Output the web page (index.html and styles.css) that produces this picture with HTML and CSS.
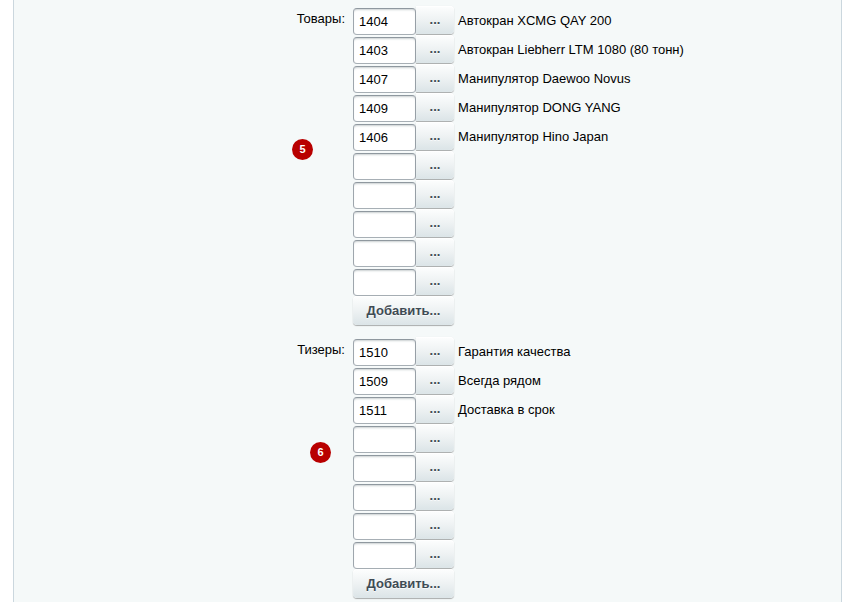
FILE: index.html
```html
<!DOCTYPE html>
<html lang="ru">
<head>
<meta charset="utf-8">
<title>Редактирование</title>
<link rel="stylesheet" href="styles.css">
</head>
<body>
<div class="panel">
  <div class="section first">
    <div class="label">Товары:</div>
    <div class="fields">
      <div class="row"><input class="inp" type="text" value="1404"><button class="dots">...</button><span class="name">Автокран XCMG QAY 200</span></div>
      <div class="row"><input class="inp" type="text" value="1403"><button class="dots">...</button><span class="name">Автокран Liebherr LTM 1080 (80 тонн)</span></div>
      <div class="row"><input class="inp" type="text" value="1407"><button class="dots">...</button><span class="name">Манипулятор Daewoo Novus</span></div>
      <div class="row"><input class="inp" type="text" value="1409"><button class="dots">...</button><span class="name">Манипулятор DONG YANG</span></div>
      <div class="row"><input class="inp" type="text" value="1406"><button class="dots">...</button><span class="name">Манипулятор Hino Japan</span></div>
      <div class="row"><input class="inp" type="text" value=""><button class="dots">...</button></div>
      <div class="row"><input class="inp" type="text" value=""><button class="dots">...</button></div>
      <div class="row"><input class="inp" type="text" value=""><button class="dots">...</button></div>
      <div class="row"><input class="inp" type="text" value=""><button class="dots">...</button></div>
      <div class="row"><input class="inp" type="text" value=""><button class="dots">...</button></div>
      <button class="add">Добавить...</button>
    </div>
    <span class="badge badge-5">5</span>
  </div>
  <div class="section second">
    <div class="label">Тизеры:</div>
    <div class="fields">
      <div class="row"><input class="inp" type="text" value="1510"><button class="dots">...</button><span class="name">Гарантия качества</span></div>
      <div class="row"><input class="inp" type="text" value="1509"><button class="dots">...</button><span class="name">Всегда рядом</span></div>
      <div class="row"><input class="inp" type="text" value="1511"><button class="dots">...</button><span class="name">Доставка в срок</span></div>
      <div class="row"><input class="inp" type="text" value=""><button class="dots">...</button></div>
      <div class="row"><input class="inp" type="text" value=""><button class="dots">...</button></div>
      <div class="row"><input class="inp" type="text" value=""><button class="dots">...</button></div>
      <div class="row"><input class="inp" type="text" value=""><button class="dots">...</button></div>
      <div class="row"><input class="inp" type="text" value=""><button class="dots">...</button></div>
      <button class="add">Добавить...</button>
    </div>
    <span class="badge badge-6">6</span>
  </div>
</div>
</body>
</html>
```

FILE: styles.css
```css
html, body {
  margin: 0;
  padding: 0;
  background: #ffffff;
}

body {
  font-family: "Liberation Sans", Arial, sans-serif;
  font-size: 13px;
  color: #000;
}

.panel {
  margin-left: 13px;
  width: 827px;
  height: 602px;
  background: #f5f9f9;
  border-left: 1px solid #cbd7de;
  border-right: 1px solid #cbd7de;
  overflow: hidden;
}

.section {
  position: relative;
  display: grid;
  grid-template-columns: 331px 1fr;
}

.section.first {
  padding-top: 6px;
}

.section.second {
  padding-top: 12px;
}

.label {
  text-align: right;
  padding-top: 5px;
  line-height: 16px;
}

.fields {
  padding-left: 8px;
  display: flex;
  flex-direction: column;
  align-items: flex-start;
}

.row {
  display: flex;
  align-items: center;
  height: 29px;
}

.inp {
  box-sizing: border-box;
  width: 63px;
  height: 27px;
  margin: 1px 0 0 0;
  padding: 0 5px;
  font-family: "Liberation Sans", Arial, sans-serif;
  font-size: 13px;
  color: #000;
  background: #fff;
  border: 1px solid;
  border-color: #8f989f #9ea6ad #a7afb5 #9ea6ad;
  border-radius: 4px;
  box-shadow: inset 0 2px 2px -1px rgba(180, 188, 191, 0.7), 0 1px 0 rgba(255, 255, 255, 0.3);
  outline: none;
}

.dots,
.add {
  box-sizing: border-box;
  border: none;
  border-radius: 4px;
  background: linear-gradient(to bottom, #fdfefe 0%, #eef2f3 50%, #dbe4e7 100%);
  box-shadow: 0 0 1px rgba(0, 0, 0, 0.11), 0 1px 1px rgba(0, 0, 0, 0.3), inset 0 1px #fff, inset 0 0 1px rgba(255, 255, 255, 0.5);
  color: #3f4b54;
  font-family: "Liberation Sans", Arial, sans-serif;
  font-weight: bold;
  font-size: 13px;
  text-shadow: 0 1px rgba(255, 255, 255, 0.7);
  padding: 0;
  cursor: pointer;
}

.dots {
  width: 38px;
  height: 28px;
  margin-top: -1px;
  border-radius: 0 4px 4px 0;
  line-height: 24px;
}

.name {
  margin-left: 4px;
  white-space: nowrap;
}

.add {
  width: 101px;
  height: 29px;
  margin-top: 0;
  font-size: 13px;
}

.badge {
  position: absolute;
  width: 21px;
  height: 21px;
  border-radius: 50%;
  background: #b80000;
  color: #fff;
  font-weight: bold;
  font-size: 11px;
  line-height: 21px;
  text-align: center;
}

.badge-5 {
  left: 278px;
  top: 139px;
}

.badge-6 {
  left: 296px;
  top: 117px;
}
```
